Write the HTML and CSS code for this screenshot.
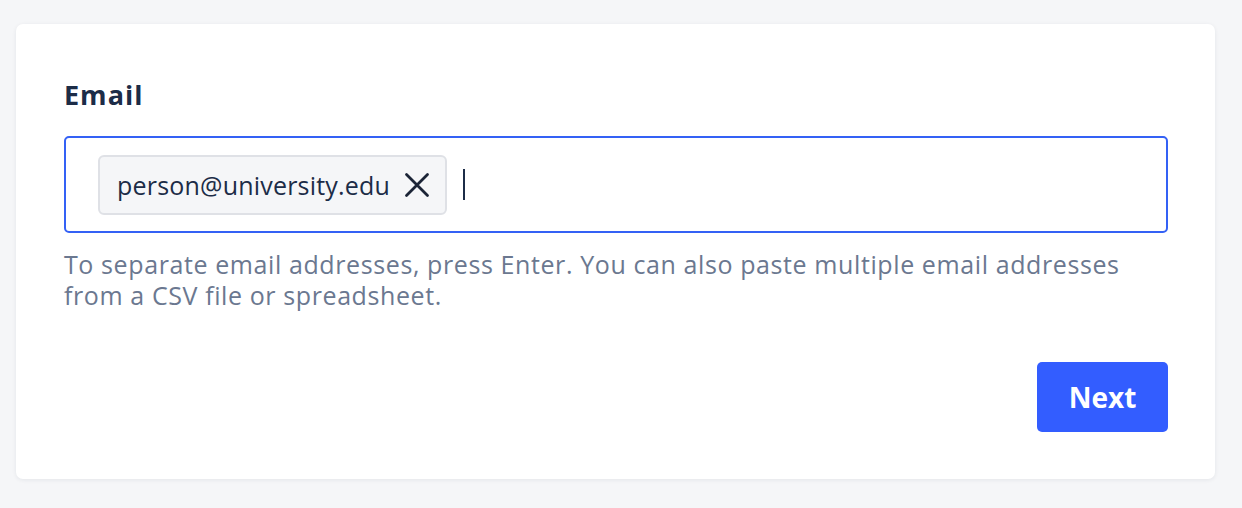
FILE: index.html
```html
<!DOCTYPE html>
<html lang="en">
<head>
    <meta charset="utf-8">
    <title>Invite by email</title>
    <link rel="stylesheet" href="styles.css">
</head>
<body>
    <div class="card">
        <label class="field-label" for="emailInput">Email</label>
        <div class="email-box">
            <span class="chip">
                person@university.edu
                <button class="chip-remove" aria-label="Remove">
                    <svg width="26" height="26" viewBox="0 0 26 26">
                        <path d="M2.5 2.5 L23.5 23.5 M23.5 2.5 L2.5 23.5" stroke="#1b2437" stroke-width="2.8" stroke-linecap="round"/>
                    </svg>
                </button>
            </span>
            <span class="caret"></span>
        </div>
        <p class="hint">To separate email addresses, press Enter. You can also paste multiple email addresses from a CSV file or spreadsheet.</p>
        <div class="actions">
            <button class="next-btn">Next</button>
        </div>
    </div>
</body>
</html>
```

FILE: styles.css
```css
body {
    margin: 0;
    padding: 24px 27px 29px 16px;
    background-color: #f5f6f8;
    font-family: "Open Sans", Lato, sans-serif;
}
.card {
    background-color: #ffffff;
    border-radius: 7px;
    box-shadow: 0 1px 4px rgba(30, 40, 70, 0.08);
    padding: 54px 47px 47px 48px;
}
.field-label {
    display: block;
    font-size: 27px;
    font-weight: 700;
    letter-spacing: 1px;
    color: #1c2c47;
    line-height: 34px;
}
.email-box {
    margin-top: 24px;
    height: 93px;
    border: 2px solid #3461f5;
    border-radius: 5px;
    display: flex;
    align-items: center;
    padding: 0 32px;
    gap: 16px;
}
.chip {
    display: flex;
    align-items: center;
    gap: 14px;
    height: 56px;
    padding: 0 15px 0 17px;
    background-color: #f5f6f8;
    border: 2px solid #dfe1e6;
    border-radius: 6px;
    font-size: 25px;
    letter-spacing: 0.2px;
    color: #1c2c47;
}
.chip-remove {
    border: none;
    background: none;
    padding: 0;
    display: flex;
    cursor: pointer;
}
.caret {
    width: 2px;
    height: 31px;
    background-color: #1c2c47;
}
.hint {
    margin: 16px 0 0;
    padding-right: 30px;
    font-size: 25px;
    letter-spacing: 0.6px;
    line-height: 31px;
    color: #6b7890;
}
.actions {
    display: flex;
    justify-content: flex-end;
    margin-top: 51px;
}
.next-btn {
    width: 131px;
    height: 70px;
    border: none;
    border-radius: 5px;
    background-color: #335dff;
    color: #ffffff;
    font-family: "Open Sans", sans-serif;
    font-size: 28px;
    font-weight: 700;
    cursor: pointer;
}
```
